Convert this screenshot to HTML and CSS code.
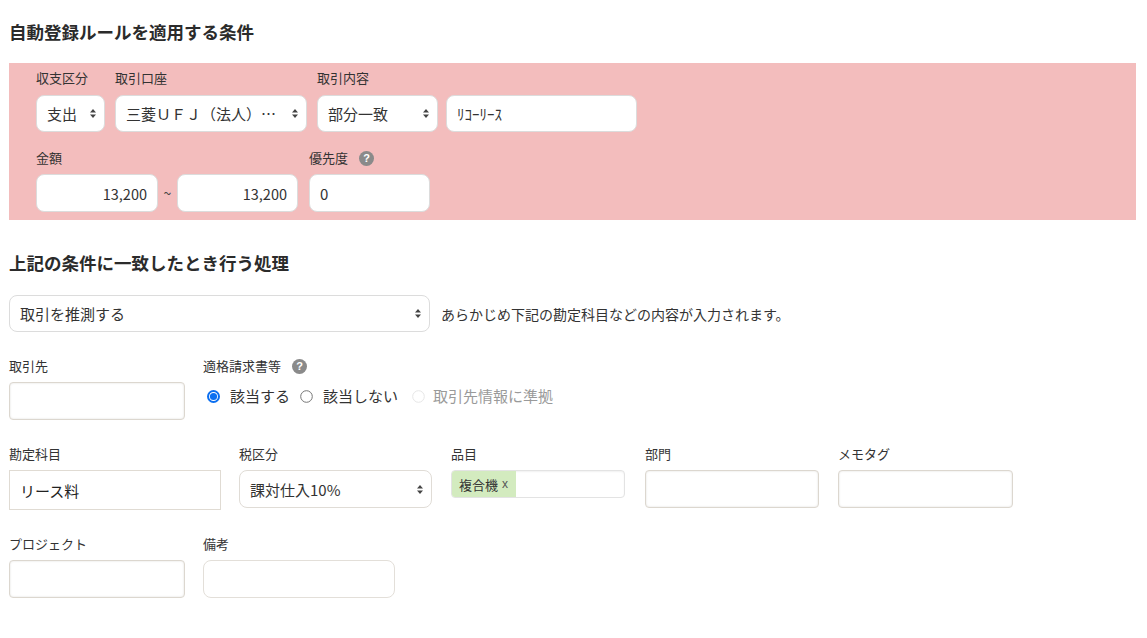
FILE: index.html
```html
<!DOCTYPE html>
<html lang="ja">
<head>
<meta charset="utf-8">
<title>自動登録ルール</title>
<link rel="stylesheet" href="styles.css">
</head>
<body>
<div class="page">
  <h1 class="heading">自動登録ルールを適用する条件</h1>

  <div class="cond">
    <div class="row">
      <div class="field">
        <div class="lbl">収支区分</div>
        <div class="ctl sel w69"><span>支出</span><svg class="arr" width="6" height="9" viewBox="0 0 6 9"><path d="M3 0L6 3.5H0Z M3 9L0 5.5H6Z" fill="#444"/></svg></div>
      </div>
      <div class="field">
        <div class="lbl">取引口座</div>
        <div class="ctl sel w192"><span>三菱ＵＦＪ（法人）…</span><svg class="arr" width="6" height="9" viewBox="0 0 6 9"><path d="M3 0L6 3.5H0Z M3 9L0 5.5H6Z" fill="#444"/></svg></div>
      </div>
      <div class="field">
        <div class="lbl">取引内容</div>
        <div class="pair">
          <div class="ctl sel w121"><span>部分一致</span><svg class="arr" width="6" height="9" viewBox="0 0 6 9"><path d="M3 0L6 3.5H0Z M3 9L0 5.5H6Z" fill="#444"/></svg></div>
          <div class="ctl w191 hw">ﾘｺｰﾘｰｽ</div>
        </div>
      </div>
    </div>
    <div class="row row2">
      <div class="field">
        <div class="lbl">金額</div>
        <div class="range">
          <div class="ctl tall w122 num">13,200</div>
          <span class="tilde">~</span>
          <div class="ctl tall w121 num">13,200</div>
        </div>
      </div>
      <div class="field">
        <div class="lbl">優先度<span class="help">?</span></div>
        <div class="ctl tall w121">0</div>
      </div>
    </div>
  </div>

  <h2 class="heading h2">上記の条件に一致したとき行う処理</h2>

  <div class="action">
    <div class="ctl sel w421"><span>取引を推測する</span><svg class="arr" width="6" height="9" viewBox="0 0 6 9"><path d="M3 0L6 3.5H0Z M3 9L0 5.5H6Z" fill="#444"/></svg></div>
    <span class="note">あらかじめ下記の勘定科目などの内容が入力されます。</span>
  </div>

  <div class="frow">
    <div class="field">
      <div class="lbl">取引先</div>
      <div class="box shadow w176"></div>
    </div>
    <div class="field">
      <div class="lbl">適格請求書等<span class="help">?</span></div>
      <div class="radios">
        <span class="radio"><svg width="13" height="13" viewBox="0 0 13 13"><circle cx="6.5" cy="6.5" r="5.5" fill="#fff" stroke="#0b6ff0" stroke-width="2"/><circle cx="6.5" cy="6.5" r="3.6" fill="#0b6ff0"/></svg>該当する</span>
        <span class="radio"><svg width="13" height="13" viewBox="0 0 13 13"><circle cx="6.5" cy="6.5" r="5.8" fill="#fff" stroke="#767676" stroke-width="1"/></svg>該当しない</span>
        <span class="radio dis"><svg width="13" height="13" viewBox="0 0 13 13"><circle cx="6.5" cy="6.5" r="5.8" fill="#fff" stroke="#e6e6e6" stroke-width="1"/></svg>取引先情報に準拠</span>
      </div>
    </div>
  </div>

  <div class="frow">
    <div class="field">
      <div class="lbl">勘定科目</div>
      <div class="box square w212">リース料</div>
    </div>
    <div class="field">
      <div class="lbl">税区分</div>
      <div class="ctl sel w193 lower"><span>課対仕入10%</span><svg class="arr" width="6" height="9" viewBox="0 0 6 9"><path d="M3 0L6 3.5H0Z M3 9L0 5.5H6Z" fill="#444"/></svg></div>
    </div>
    <div class="field f3">
      <div class="lbl">品目</div>
      <div class="tagbox w174"><span class="tag">複合機 <span class="x">x</span></span></div>
    </div>
    <div class="field f4">
      <div class="lbl">部門</div>
      <div class="box shadow w174"></div>
    </div>
    <div class="field f5">
      <div class="lbl">メモタグ</div>
      <div class="box shadow w175"></div>
    </div>
  </div>

  <div class="frow">
    <div class="field">
      <div class="lbl">プロジェクト</div>
      <div class="box shadow w176"></div>
    </div>
    <div class="field">
      <div class="lbl">備考</div>
      <div class="box round w192"></div>
    </div>
  </div>
</div>
</body>
</html>
```
FILE: styles.css
```css
* { box-sizing: border-box; }
body {
  margin: 0;
  background: #fff;
  color: #333;
  font-family: "Noto Sans CJK JP", "Noto Sans", sans-serif;
}
.page { padding: 21px 11px 0 9px; }
.heading {
  margin: 0;
  font-size: 17.5px;
  line-height: 22px;
  font-weight: bold;
  color: #2b2b2b;
}
.h2 { margin-top: 32px; }

.cond {
  margin-top: 20px;
  background: #f3bdbd;
  padding: 6px 27px 8px;
}
.row { display: flex; gap: 10px; }
.row2 { margin-top: 17px; gap: 11px; }
.row2 .lbl { margin-bottom: 7px; }
.pair { display: flex; gap: 8px; }
.range { display: flex; align-items: center; }
.tilde { width: 19px; text-align: center; font-size: 14px; color: #444; }

.lbl {
  display: flex;
  align-items: center;
  font-size: 13px;
  line-height: 18px;
  margin-bottom: 8px;
  color: #333;
}
.help {
  display: inline-flex;
  align-items: center;
  justify-content: center;
  width: 15px;
  height: 15px;
  margin-left: 11px;
  border-radius: 50%;
  background: #8a8a8a;
  color: #fff;
  font-size: 11px;
  font-weight: bold;
  font-family: "Liberation Sans", sans-serif;
}

.ctl {
  height: 37px;
  display: flex;
  align-items: center;
  padding: 0 10px;
  background: #fff;
  border: 1px solid #dcdcdc;
  border-radius: 8px;
  font-size: 15px;
  color: #333;
  white-space: nowrap;
}
.ctl.tall { height: 38px; }
.ctl.lower { height: 38px; border-color: #e0dcd6; }
.sel { justify-content: space-between; padding-right: 8px; }
.arr { flex: none; }
.num { justify-content: flex-end; font-size: 14.5px; }
.hw { font-size: 15px; }

.w69 { width: 69px; }
.w121 { width: 121px; }
.w122 { width: 122px; }
.w174 { width: 174px; }
.w175 { width: 175px; }
.w176 { width: 176px; }
.w191 { width: 191px; }
.w192 { width: 192px; }
.w193 { width: 193px; }
.w212 { width: 212px; }
.w421 { width: 421px; }

.action {
  margin-top: 21px;
  display: flex;
  align-items: center;
}
.note { margin-left: 11px; font-size: 14px; color: #333; }

.frow {
  margin-top: 25px;
  display: flex;
  gap: 18px;
}
.frow .lbl { margin-bottom: 7px; }
.f3 { margin-left: 1px; }
.f4 { margin-left: 2px; }
.f5 { margin-left: 1px; }

.box {
  height: 38px;
  background: #fff;
  display: flex;
  align-items: center;
  padding: 0 10px;
  font-size: 15px;
  color: #222;
}
.shadow {
  border: 1px solid #dcd7cf;
  border-radius: 4px;
  box-shadow: inset 0 0 2px rgba(120, 110, 95, 0.25);
}
.square {
  height: 40px;
  border: 1px solid #e0dbd3;
  border-radius: 0;
}
.round {
  border: 1px solid #e3dfd9;
  border-radius: 8px;
}

.radios {
  margin-top: 10px;
  display: flex;
  align-items: center;
  font-size: 15px;
  line-height: 22px;
  color: #333;
}
.radio { display: inline-flex; align-items: center; margin-left: 4px; margin-right: 6px; }
.radio svg { margin-right: 10px; }
.radio.dis { color: #9a9a9a; margin-left: 8px; }
.radio.dis svg { margin-right: 8px; }

.tagbox {
  height: 28px;
  margin-top: 1px;
  border: 1px solid #e3e3e3;
  border-radius: 4px;
  box-shadow: inset 0 1px 2px rgba(0, 0, 0, 0.06);
  display: flex;
  align-items: stretch;
}
.tag {
  display: flex;
  align-items: center;
  background: #d3ebbf;
  padding: 0 8px 0 7px;
  border-radius: 3px 0 0 3px;
  font-size: 13px;
  color: #333;
}
.tag .x { margin-left: 4px; font-size: 12px; color: #555; font-family: "Liberation Sans", sans-serif; }
```
